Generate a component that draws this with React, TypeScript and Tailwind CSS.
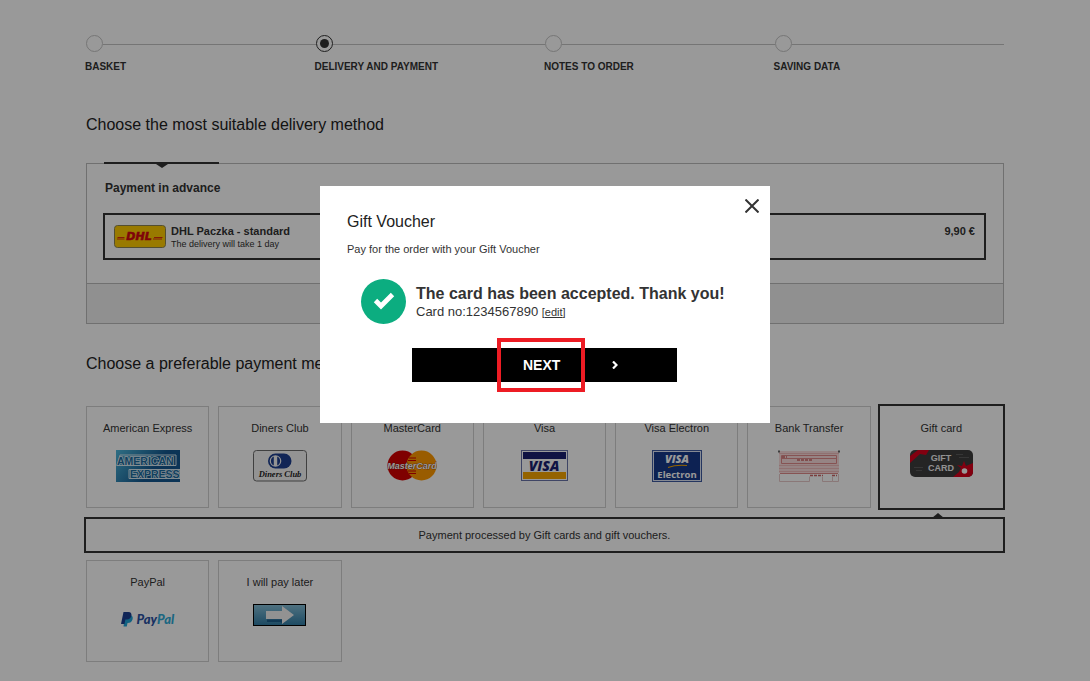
import React, { useState } from 'react';

const steps = ['Basket', 'Delivery and payment', 'Notes to order', 'Saving data'];

const DhlLogo: React.FC = () => (
    <svg width="52" height="23" viewBox="0 0 52 23" className="mt-px" aria-hidden="true">
        <rect x="0.5" y="0.5" width="51" height="22" rx="3" fill="#ffcc00" stroke="#8c8450" />
        <path d="M3.5 12.5h7M3 14h7.5M40 12.5h8.5M39 14h9" stroke="#d40511" strokeWidth="0.8" />
        <text x="25" y="15" textAnchor="middle" fontFamily="DejaVu Sans, sans-serif" fontSize="11" fontWeight="700" fontStyle="italic" fill="#d40511" stroke="#d40511" strokeWidth="0.6">
            DHL
        </text>
    </svg>
);

const AmexLogo: React.FC = () => (
    <svg width="64" height="32" viewBox="0 0 64 32" aria-hidden="true">
        <defs>
            <linearGradient id="amex" x1="0" y1="0" x2="1" y2="0.4">
                <stop offset="0" stopColor="#4fb8dc" />
                <stop offset="0.7" stopColor="#14588f" />
                <stop offset="1" stopColor="#14588f" />
            </linearGradient>
        </defs>
        <rect width="64" height="32" fill="url(#amex)" />
        <path d="M1 15.5L4 5h56v10.5zM13 28.5V19.5h51v9z" fill="none" stroke="#d5e6ef" />
        <g fontFamily="Liberation Sans, Arial, sans-serif" fontWeight="700" fill="#1b6c9f" stroke="#dcebf3" strokeWidth="1.6" paintOrder="stroke">
            <text x="1" y="14.5" fontSize="10.5">AMERICAN</text>
            <text x="14" y="28" fontSize="10.5">EXPRESS</text>
        </g>
    </svg>
);

const DinersLogo: React.FC = () => (
    <svg width="54" height="32" viewBox="0 0 54 32" aria-hidden="true">
        <rect x="0.5" y="0.5" width="53" height="30.5" rx="3" fill="#f6f6f6" stroke="#6b6b6b" />
        <path d="M22.5 3.5h8.5a7.5 7.5 0 0 1 0 15h-8.5a7.5 7.5 0 0 1 0-15z" fill="#1d3f8f" />
        <circle cx="22.5" cy="11" r="5.8" fill="#f6f6f6" />
        <path d="M20.8 6.6a4.8 4.8 0 0 0 0 8.8zM24.2 6.6a4.8 4.8 0 0 1 0 8.8z" fill="#1d3f8f" />
        <text x="27" y="26.5" textAnchor="middle" fontFamily="Liberation Serif, Times New Roman, serif" fontSize="8.5" fontWeight="700" fontStyle="italic" fill="#222">
            Diners Club
        </text>
    </svg>
);

const MasterCardLogo: React.FC = () => (
    <svg width="50" height="31" viewBox="0 0 50 31" aria-hidden="true">
        <circle cx="15.5" cy="15.5" r="15" fill="#d40000" />
        <circle cx="34.5" cy="15.5" r="15" fill="#ff9900" />
        <path d="M22 8h7M21 10.5h8M21 21h8M22 23.5h7" stroke="#d40000" strokeWidth="1.2" />
        <text x="25" y="19" textAnchor="middle" fontFamily="Liberation Sans, Arial, sans-serif" fontSize="9" fontWeight="700" fontStyle="italic" fill="#fff" stroke="#6b2a1a" strokeWidth="0.6" paintOrder="stroke">
            MasterCard
        </text>
    </svg>
);

const VisaLogo: React.FC = () => (
    <svg width="47" height="31" viewBox="0 0 47 31" aria-hidden="true">
        <rect x="0.5" y="0.5" width="46" height="30" fill="#fff" stroke="#6a74a8" />
        <rect x="2" y="2" width="43" height="7" fill="#1a1f71" />
        <rect x="2" y="22" width="43" height="7" fill="#f7a600" />
        <text x="23" y="20.5" textAnchor="middle" fontFamily="Open Sans, sans-serif" fontSize="14" fontWeight="800" fontStyle="italic" fill="#1a1f71">
            VISA
        </text>
    </svg>
);

const VisaElectronLogo: React.FC = () => (
    <svg width="50" height="32" viewBox="0 0 50 32" aria-hidden="true">
        <rect x="0.5" y="0.5" width="49" height="31" fill="#dfe6f5" stroke="#3f5ba0" />
        <rect x="2" y="2" width="46" height="28" fill="#173a8a" />
        <text x="25" y="13" textAnchor="middle" fontFamily="Open Sans, sans-serif" fontSize="11" fontWeight="800" fontStyle="italic" fill="#fff">
            VISA
        </text>
        <text x="25" y="27.5" textAnchor="middle" fontFamily="Open Sans, sans-serif" fontSize="9.5" fontWeight="700" fill="#fff">
            Electron
        </text>
        <path d="M16 17.5q8-3 19-2" fill="none" stroke="#f7a600" strokeWidth="1.2" />
    </svg>
);

const TransferLogo: React.FC = () => (
    <svg width="62" height="32" viewBox="0 0 62 32" fill="none" aria-hidden="true">
        <rect x="1" y="1" width="60" height="22" fill="#fbdcdc" />
        <path d="M1 3.5h60M1 15.5h60M1 18.5h60M1 21.5h60" stroke="#f0bcbc" />
        <path d="M3.5 5.5h55v8h-55zM4 8.5h54M2 23.5h58" stroke="#e08a8a" />
        <path d="M19 10h16M32 25.5h13M54 25.5h5M4 7h5" stroke="#cc6666" strokeWidth="1.5" strokeDasharray="3 1" />
        <path d="M1.5 24v7.5h30v-5M44.5 27v4.5h10v-5M60.5 24v7.5h-6" stroke="#e6c8c8" />
        <path d="M0 1.5h2M60 1.5h2" stroke="#666" strokeWidth="2" />
    </svg>
);

const GiftCardLogo: React.FC = () => (
    <svg width="63" height="27" viewBox="0 0 63 27" aria-hidden="true">
        <defs>
            <clipPath id="gift">
                <rect width="63" height="27" rx="5" />
            </clipPath>
        </defs>
        <g clipPath="url(#gift)">
            <rect width="63" height="27" fill="#3d3d3d" />
            <path d="M4 17.5h9M49 7.5h10M46 4.5h7M6 20.5h6" stroke="#5a5a5a" />
            <path d="M0 13V6L8 0h11l-3 5-6-1z" fill="#d9001b" />
            <path d="M43 27l6-5 2-4-4-3 5 1 2-5 2 5 7-3v14z" fill="#d9001b" />
            <circle cx="54.5" cy="21" r="2.8" fill="#fff" />
            <g fontFamily="Liberation Sans, Arial, sans-serif" fontSize="9" fontWeight="700" fill="#f2f2f2" textAnchor="middle">
                <text x="31" y="11">GIFT</text>
                <text x="31" y="21">CARD</text>
            </g>
        </g>
    </svg>
);

const PayPalLogo: React.FC = () => (
    <svg width="54" height="28" viewBox="0 0 54 28" aria-hidden="true">
        <path d="M4 11h5.5q3 1 2 4.5-1 3.5-5 3.5l-.7 3.5H2.5z" fill="#1fa3d8" />
        <path d="M2.5 8h5q3.5.3 2.9 3.8-.8 3.7-4.6 3.7H4.4L3.5 20H0z" fill="#1b3f91" />
        <text x="15.5" y="20" fontFamily="Lato, sans-serif" fontSize="13" fontWeight="900" fontStyle="italic">
            <tspan fill="#2a52a3">Pay</tspan>
            <tspan fill="#2fabd8">Pal</tspan>
        </text>
    </svg>
);

const PayLaterLogo: React.FC = () => (
    <svg width="53" height="22" viewBox="0 0 53 22" aria-hidden="true">
        <defs>
            <linearGradient id="later" x1="0" y1="0" x2="0" y2="1">
                <stop offset="0" stopColor="#86bfd8" />
                <stop offset="1" stopColor="#2f7ba4" />
            </linearGradient>
        </defs>
        <rect x="0.5" y="0.5" width="52" height="21" fill="url(#later)" stroke="#000" />
        <path d="M14 15.5h15v3.5l-2-1H14z" fill="#1d5f8c" />
        <path d="M13 7h16V2l12 9-12 9v-5H13z" fill="#f4f4f4" />
    </svg>
);

interface PaymentMethod {
    name: string;
    Logo: React.FC;
}

const firstRow: PaymentMethod[] = [
    { name: 'American Express', Logo: AmexLogo },
    { name: 'Diners Club', Logo: DinersLogo },
    { name: 'MasterCard', Logo: MasterCardLogo },
    { name: 'Visa', Logo: VisaLogo },
    { name: 'Visa Electron', Logo: VisaElectronLogo },
    { name: 'Bank Transfer', Logo: TransferLogo },
    { name: 'Gift card', Logo: GiftCardLogo }
];

const secondRow: PaymentMethod[] = [
    { name: 'PayPal', Logo: PayPalLogo },
    { name: 'I will pay later', Logo: PayLaterLogo }
];

const PaymentCard: React.FC<{ method: PaymentMethod; selected: boolean; onSelect: () => void }> = ({
    method,
    selected,
    onSelect
}) => (
    <button
        type="button"
        aria-pressed={selected}
        onClick={onSelect}
        className={
            selected
                ? 'relative -m-0.5 flex h-[106px] flex-col items-center gap-3.5 border-2 border-[#333] pt-3.5'
                : 'flex h-[102px] flex-col items-center gap-3.5 border border-[#d0d0d0] pt-[13px]'
        }
    >
        <span className="text-[11px] leading-4">{method.name}</span>
        <method.Logo />
    </button>
);

const GiftVoucherDialog: React.FC<{ onClose: () => void }> = ({ onClose }) => (
    <div className="fixed inset-0 flex items-start justify-center bg-black/40 pt-[186px]">
        <div role="dialog" aria-labelledby="voucher-title" className="relative w-full max-w-[450px] bg-white px-[27px] pt-[26px] pb-[41px]">
            <button type="button" aria-label="Close" onClick={onClose} className="absolute top-3 right-2.5 p-px">
                <svg width="14" height="14" viewBox="0 0 14 14" stroke="#333" strokeWidth="2" aria-hidden="true">
                    <path d="M0.5 0.5l13 13M13.5 0.5l-13 13" />
                </svg>
            </button>
            <h2 id="voucher-title" className="text-base leading-5 text-[#222]">Gift Voucher</h2>
            <p className="mt-[9px] text-[11px] leading-4">Pay for the order with your Gift Voucher</p>
            <div className="mt-[22px] flex gap-2.5 pl-3.5">
                <svg width="45" height="45" viewBox="0 0 45 45" className="shrink-0" aria-hidden="true">
                    <circle cx="22.5" cy="22.5" r="22.5" fill="#0cad80" />
                    <path d="M14.5 21.5l5.5 5.5L31.5 15.5" fill="none" stroke="#fff" strokeWidth="4.8" />
                </svg>
                <div className="pt-[5px]">
                    <p className="text-base leading-5 font-bold whitespace-nowrap">The card has been accepted. Thank you!</p>
                    <p className="text-[13px] leading-4">
                        Card no:1234567890{' '}
                        <a href="#edit" className="text-[11px]">[<span className="underline">edit</span>]</a>
                    </p>
                </div>
            </div>
            <button
                type="button"
                onClick={onClose}
                className="relative mt-6 ml-[65px] flex h-[34px] w-[265px] items-center gap-[52px] bg-black pl-[111px] text-sm font-bold text-white"
            >
                NEXT
                <svg width="6" height="8" viewBox="0 0 6 8" fill="none" stroke="#fff" strokeWidth="2.2" aria-hidden="true">
                    <path d="M1 0.5L4.5 4L1 7.5" />
                </svg>
                <span className="absolute -inset-y-2.5 left-[85px] w-[88px] border-4 border-[#ed1c24]" />
            </button>
        </div>
    </div>
);

const App: React.FC = () => {
    const [selected, setSelected] = useState('Gift card');
    const [dialogOpen, setDialogOpen] = useState(true);

    const renderCard = (method: PaymentMethod) => (
        <PaymentCard
            key={method.name}
            method={method}
            selected={selected === method.name}
            onSelect={() => setSelected(method.name)}
        />
    );

    return (
        <div className="min-h-screen bg-white font-['Liberation_Sans',Arial,sans-serif] text-[#333]">
            <main className="mx-auto w-full max-w-[918px] pt-[35px] pb-[19px]">
                <ol className="grid grid-cols-4">
                    {steps.map((step, i) => (
                        <li key={step}>
                            <div className="flex items-center">
                                <span
                                    className={
                                        i === 1
                                            ? 'flex size-[17px] items-center justify-center rounded-full border border-[#333]'
                                            : 'size-[17px] rounded-full border border-[#c4c4c4]'
                                    }
                                >
                                    {i === 1 && <span className="size-[9px] rounded-full bg-[#333]" />}
                                </span>
                                <span className="mt-0.5 h-px flex-1 bg-[#c4c4c4]" />
                            </div>
                            <p className="mt-2 -ml-px text-[10px] leading-3.5 font-bold uppercase">{step}</p>
                        </li>
                    ))}
                </ol>

                <h1 className="mt-[41px] text-base leading-5 text-[#222]">Choose the most suitable delivery method</h1>

                <section className="mt-7 border border-[#bbb]">
                    <div className="relative pt-4 pr-[17px] pb-[23px] pl-4">
                        <div className="absolute -top-0.5 left-[17px] h-0.5 w-[115px] bg-[#333]">
                            <svg width="12" height="4" viewBox="0 0 12 4" className="mx-auto translate-y-0.5" aria-hidden="true">
                                <path d="M0 0h12L6 4z" fill="#333" />
                            </svg>
                        </div>
                        <h2 className="pl-0.5 text-xs leading-4 font-bold">Payment in advance</h2>
                        <button type="button" aria-pressed="true" className="mt-[17px] flex h-[47px] w-full items-start border-2 border-[#333] px-[9px] pt-[9px] text-left">
                            <DhlLogo />
                            <span className="ml-[5px] flex-1">
                                <span className="block text-[11px] leading-3.5 font-bold">DHL Paczka - standard</span>
                                <span className="block text-[9px] leading-3">The delivery will take 1 day</span>
                            </span>
                            <span className="text-[11px] leading-3.5 font-bold">9,90 €</span>
                        </button>
                    </div>
                    <div className="h-10 border-t border-[#bbb] bg-[#f0f0f0]" />
                </section>

                <h1 className="mt-[30px] text-base leading-5 text-[#222]">Choose a preferable payment method</h1>

                <section className="mt-8 mr-px grid grid-cols-7 gap-[9px]">
                    {firstRow.map(renderCard)}
                    <div className="relative col-span-7 -mx-0.5 -mb-0.5 h-9 border-2 border-[#333] text-center text-[11px] leading-8">
                        Payment processed by Gift cards and gift vouchers.
                        <svg width="12" height="5" viewBox="0 0 12 5" className="absolute -top-1.5 right-[59px]" aria-hidden="true">
                            <path d="M0 5h12L6 0z" fill="#333" />
                        </svg>
                    </div>
                    {secondRow.map(renderCard)}
                </section>
            </main>
            {dialogOpen && <GiftVoucherDialog onClose={() => setDialogOpen(false)} />}
        </div>
    );
};

export default App;
